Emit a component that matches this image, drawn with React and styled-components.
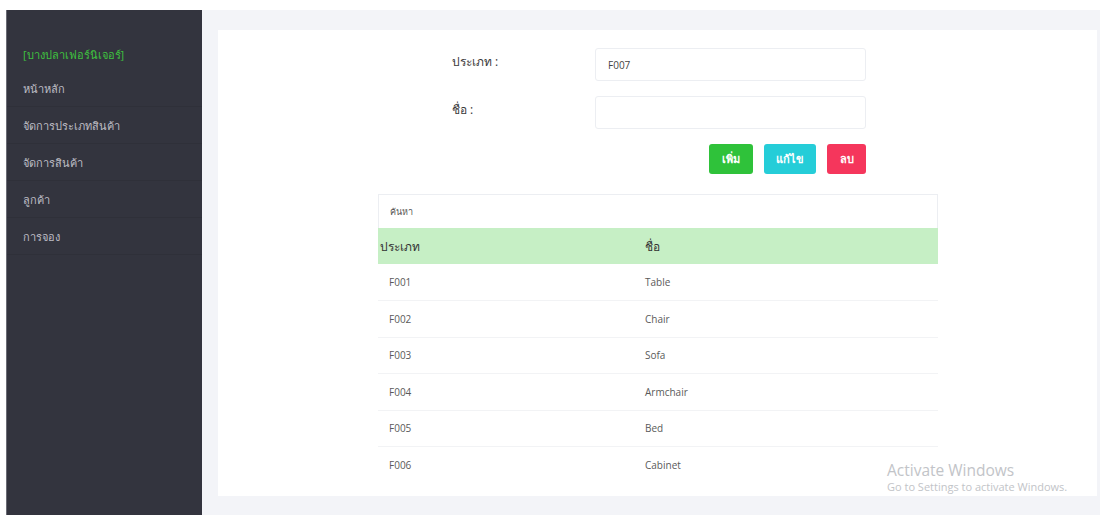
import React from 'react';
import styled, { createGlobalStyle } from 'styled-components';

const GlobalStyle = createGlobalStyle`
  body {
    margin: 0;
    background: #ffffff;
    font-family: "Open Sans", "Noto Sans", sans-serif;
  }
  * { box-sizing: border-box; }
`;

const menu = ['หน้าหลัก', 'จัดการประเภทสินค้า', 'จัดการสินค้า', 'ลูกค้า', 'การจอง'];

const types = [
  { id: 'F001', name: 'Table' },
  { id: 'F002', name: 'Chair' },
  { id: 'F003', name: 'Sofa' },
  { id: 'F004', name: 'Armchair' },
  { id: 'F005', name: 'Bed' },
  { id: 'F006', name: 'Cabinet' },
];

function App() {
  return (
    <>
      <GlobalStyle />
      <Page>
        <Sidebar>
          <Brand>[บางปลาเฟอร์นิเจอร์]</Brand>
          {menu.map((m, i) => (
            <MenuItem key={i}>{m}</MenuItem>
          ))}
        </Sidebar>
        <Main>
          <Card>
            <Form>
              <Label>ประเภท :</Label>
              <Input defaultValue="F007" />
              <Label>ชื่อ :</Label>
              <Input defaultValue="" />
            </Form>
            <Buttons>
              <Button color="#2fc23a" w={44}>เพิ่ม</Button>
              <Button color="#25cdd8" w={52}>แก้ไข</Button>
              <Button color="#f5365c" w={39}>ลบ</Button>
            </Buttons>
            <TableWrap>
              <Search placeholder="ค้นหา" />
              <Table>
                <thead>
                  <tr>
                    <Th>ประเภท</Th>
                    <Th>ชื่อ</Th>
                  </tr>
                </thead>
                <tbody>
                  {types.map((t, i) => (
                    <Row key={t.id} last={i === types.length - 1}>
                      <Td>{t.id}</Td>
                      <Td>{t.name}</Td>
                    </Row>
                  ))}
                </tbody>
              </Table>
            </TableWrap>
          </Card>
        </Main>
        <Watermark>
          <big>Activate Windows</big>
          <small>Go to Settings to activate Windows.</small>
        </Watermark>
      </Page>
    </>
  );
}

export default App;

const Page = styled.div`
  position: relative;
  display: flex;
  height: 515px;
  padding-top: 10px;
  overflow: hidden;
`;

const Sidebar = styled.div`
  width: 196px;
  margin-left: 6px;
  background: #33343e;
  border-left: 1px solid #6a6b74;
  display: flex;
  flex-direction: column;
`;

const Brand = styled.div`
  color: #3fc23f;
  font-size: 11px;
  line-height: 16px;
  padding: 37px 0 7px 16px;
`;

const MenuItem = styled.div`
  color: #bdbdc4;
  font-size: 11px;
  height: 37px;
  line-height: 37px;
  padding-left: 16px;
  border-bottom: 1px solid #2f3039;
`;

const Main = styled.div`
  flex: 1;
  background: #f3f4f8;
  padding: 20px 3px 19px 16px;
`;

const Card = styled.div`
  background: #ffffff;
  height: 100%;
  padding-top: 18px;
`;

const Form = styled.div`
  display: grid;
  grid-template-columns: 143px 271px;
  row-gap: 15px;
  margin-left: 234px;
  align-items: center;
`;

const Label = styled.div`
  font-size: 12px;
  color: #3a3a3a;
  font-weight: 500;
  align-self: start;
  padding-top: 4px;
`;

const Input = styled.input`
  height: 33px;
  border: 1px solid #eceef2;
  border-radius: 3px;
  padding: 0 12px;
  font-family: "Open Sans", sans-serif;
  font-size: 10px;
  color: #444;
  outline: none;
`;

const Buttons = styled.div`
  display: flex;
  gap: 11px;
  justify-content: flex-end;
  width: 414px;
  margin: 15px 0 0 234px;
`;

const Button = styled.button`
  width: ${p => p.w}px;
  height: 30px;
  border: none;
  border-radius: 3px;
  background: ${p => p.color};
  color: #fff;
  font-size: 11px;
  font-weight: 600;
  padding: 0;
  font-family: "Open Sans", sans-serif;
`;

const TableWrap = styled.div`
  width: 560px;
  margin: 20px 0 0 160px;
`;

const Search = styled.input`
  display: block;
  width: 100%;
  height: 34px;
  border: 1px solid #eceef2;
  border-bottom: none;
  padding: 0 11px;
  font-size: 9px;
  font-family: "Open Sans", sans-serif;
  outline: none;
  &::placeholder { color: #555; }
`;

const Table = styled.table`
  width: 100%;
  border-collapse: collapse;
  table-layout: fixed;
`;

const Th = styled.th`
  background: #c6efc5;
  height: 36px;
  text-align: left;
  font-weight: 500;
  font-size: 12px;
  color: #333;
  padding: 0;
  &:first-child { padding-left: 2px; width: 267px; }
`;

const Row = styled.tr`
  height: 36.5px;
  border-bottom: ${p => (p.last ? 'none' : '1px solid #f2f3f5')};
`;

const Td = styled.td`
  font-size: 10px;
  color: #5a5a5a;
  padding: 0;
  &:first-child { padding-left: 11px; }
`;

const Watermark = styled.div`
  position: absolute;
  left: 887px;
  top: 460px;
  display: flex;
  flex-direction: column;
  font-family: "Open Sans", sans-serif;
  color: #c2c4c8;
  big { font-size: 15.5px; line-height: 20px; }
  small { font-size: 11px; line-height: 14px; }
`;
